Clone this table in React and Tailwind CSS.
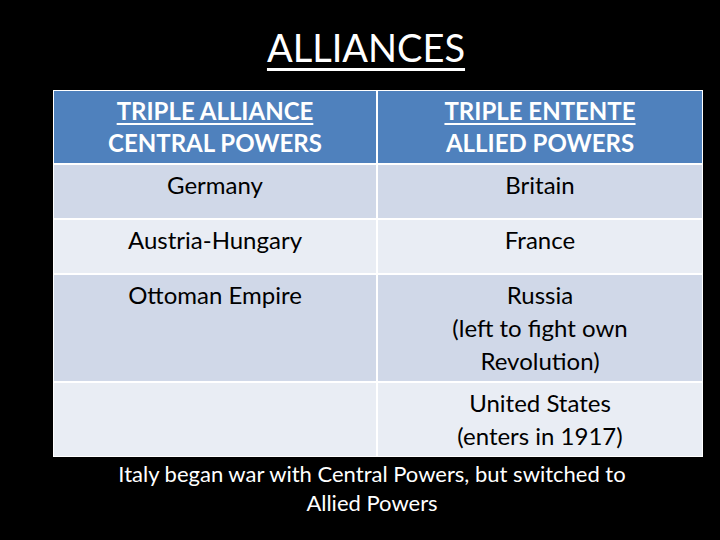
export default function App() {
  const rows = [
    { left: ["Germany"], right: ["Britain"], bg: "bg-[#d0d8e8]", h: "h-[55px]" },
    { left: ["Austria-Hungary"], right: ["France"], bg: "bg-[#e9edf4]", h: "h-[55px]" },
    {
      left: ["Ottoman Empire"],
      right: ["Russia", "(left to fight own", "Revolution)"],
      bg: "bg-[#d0d8e8]",
      h: "h-[108px]",
    },
    { left: [], right: ["United States", "(enters in 1917)"], bg: "bg-[#e9edf4]", h: "h-[75px]" },
  ];

  return (
    <div
      className="w-[720px] h-[540px] bg-black text-white overflow-hidden"
      style={{ fontFamily: "Lato, 'Open Sans', sans-serif" }}
    >
      <h1 className="pt-[25px] pl-[12px] text-center text-[38px] leading-[44px] underline decoration-[3px] underline-offset-[6px]">
        ALLIANCES
      </h1>

      <div className="ml-[53px] mt-[21px] w-[650px] border border-white">
        <div className="grid grid-cols-[324px_324px] h-[72px] bg-[#4f81bd] font-bold text-[24px] leading-[32px] text-center">
          <div className="border-r-2 border-white pt-[4px]">
            <div className="underline underline-offset-[3px]">TRIPLE ALLIANCE</div>
            <div>CENTRAL POWERS</div>
          </div>
          <div className="pt-[4px]">
            <div className="underline underline-offset-[3px]">TRIPLE ENTENTE</div>
            <div>ALLIED POWERS</div>
          </div>
        </div>
        {rows.map((r, i) => (
          <div
            key={i}
            className={`grid grid-cols-[324px_324px] ${r.h} ${r.bg} border-t-2 border-white text-black text-[24px] leading-[33px] text-center`}
          >
            <div className="border-r-2 border-white pt-[3px]">
              {r.left.map((t) => (
                <div key={t}>{t}</div>
              ))}
            </div>
            <div className="pt-[3px]">
              {r.right.map((t) => (
                <div key={t}>{t}</div>
              ))}
            </div>
          </div>
        ))}
      </div>

      <div className="mt-[2px] text-center text-[22px] leading-[29px] pl-[112px] pr-[88px]">
        Italy began war with Central Powers, but switched to Allied Powers
      </div>
    </div>
  );
}
